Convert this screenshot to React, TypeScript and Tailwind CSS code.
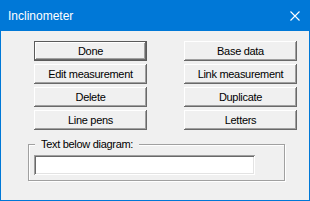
const buttons: [string, string][] = [
  ["Done", "Base data"],
  ["Edit measurement", "Link measurement"],
  ["Delete", "Duplicate"],
  ["Line pens", "Letters"],
];

const face =
  "h-[20px] w-[113px] bg-[#f0f0f0] text-[11px] leading-[13px] tracking-[-0.3px] text-black flex items-center justify-center";
const raised =
  "shadow-[inset_-1px_-1px_0_#696969,inset_1px_1px_0_#ffffff,inset_-2px_-2px_0_#a0a0a0]";
const defaultBtn =
  "shadow-[inset_0_0_0_1px_#5a5a5a,inset_-2px_-2px_0_#696969,inset_2px_2px_0_#ffffff,inset_-3px_-3px_0_#a0a0a0]";

export default function App() {
  return (
    <div
      className="w-[310px] h-[201px] bg-[#0078d7] p-[1px] flex flex-col"
      style={{ fontFamily: '"Liberation Sans", Arial, sans-serif' }}
    >
      <div className="h-[30px] flex items-center justify-between pl-[7px] pr-[9px] text-white">
        <span className="text-[12px]">Inclinometer</span>
        <svg width="10" height="10" viewBox="0 0 10 10" className="block">
          <path d="M0.5 0.5L9.5 9.5M9.5 0.5L0.5 9.5" stroke="#ffffff" strokeWidth="1.1" />
        </svg>
      </div>

      <div className="flex-1 bg-[#f0f0f0] flex flex-col pl-[27px] pt-[10px]">
        <div className="ml-[6px] grid grid-cols-[113px_113px] gap-x-[37px] gap-y-[3px]">
          {buttons.flatMap(([l, r], i) => [
            <button key={l} className={`${face} ${i === 0 ? defaultBtn : raised}`}>
              {l}
            </button>,
            <button key={r} className={`${face} ${raised}`}>
              {r}
            </button>,
          ])}
        </div>

        <div className="relative mt-[14px] w-[257px] h-[37px] border border-[#a0a0a0] shadow-[1px_1px_0_#ffffff,inset_1px_1px_0_#ffffff] pl-[5px] pt-[10px]">
          <span className="absolute left-[6px] top-[-7px] bg-[#f0f0f0] px-[6px] text-[11px] leading-[13px] tracking-[-0.3px] text-black">
            Text below diagram:
          </span>
          <input
            type="text"
            className="block w-[221px] h-[20px] bg-white outline-none px-[3px] text-[11px] shadow-[inset_1px_1px_0_#a0a0a0,inset_-1px_-1px_0_#ffffff,inset_2px_2px_0_#696969,inset_-2px_-2px_0_#e3e3e3]"
          />
        </div>
      </div>
    </div>
  );
}
